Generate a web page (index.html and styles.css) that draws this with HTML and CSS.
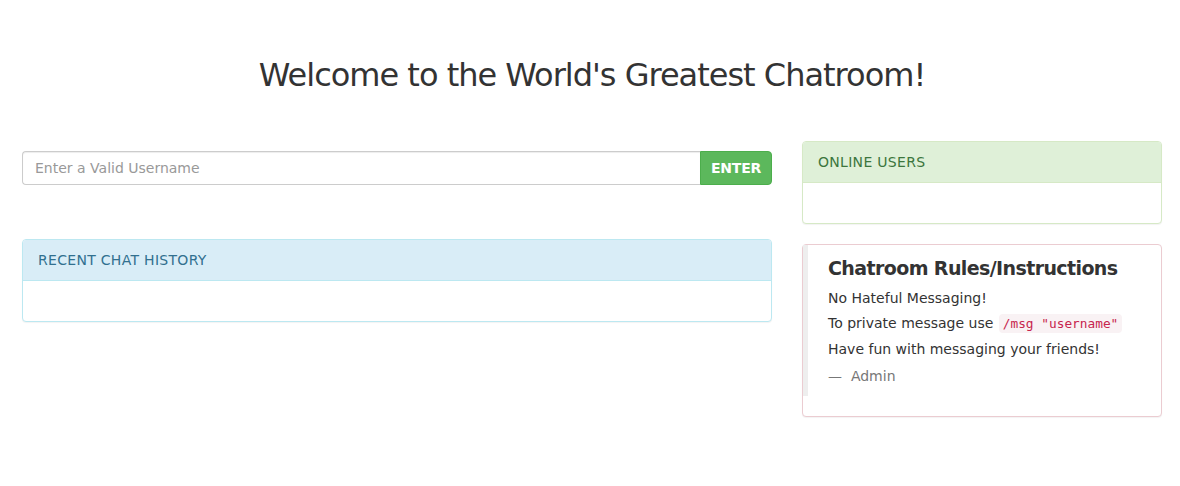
FILE: index.html
```html
<!DOCTYPE html>
<html lang="en">
<head>
<meta charset="utf-8">
<title>Chatroom</title>
<link rel="stylesheet" href="styles.css">
</head>
<body>
<div class="page">
  <h1 class="title">Welcome to the World's Greatest Chatroom!</h1>
  <div class="row">
    <div class="col-main">
      <form class="input-group">
        <input class="username" type="text" placeholder="Enter a Valid Username">
        <button class="btn-enter" type="button">ENTER</button>
      </form>
      <div class="panel panel-info chat-panel">
        <div class="panel-heading">RECENT CHAT HISTORY</div>
        <div class="panel-body"></div>
      </div>
    </div>
    <div class="col-side">
      <div class="panel panel-success">
        <div class="panel-heading">ONLINE USERS</div>
        <div class="panel-body"></div>
      </div>
      <div class="panel panel-danger rules">
        <blockquote class="quote">
          <h4 class="rules-title">Chatroom Rules/Instructions</h4>
          <p>No Hateful Messaging!</p>
          <p>To private message use <code>/msg "username"</code></p>
          <p>Have fun with messaging your friends!</p>
          <footer class="quote-footer">Admin</footer>
        </blockquote>
      </div>
    </div>
  </div>
</div>
</body>
</html>
```

FILE: styles.css
```css
* { box-sizing: border-box; }
html, body { margin: 0; padding: 0; background: #fff; }
body {
  font-family: "DejaVu Sans", Verdana, sans-serif;
  font-size: 14px;
  line-height: 20px;
  color: #333;
}
.page {
  padding: 0 18px 0 22px;
}
.title {
  margin: 0;
  padding-top: 55px;
  height: 141px;
  font-size: 32px;
  line-height: 40px;
  letter-spacing: -1px;
  font-weight: normal;
  text-align: center;
  color: #333;
}
.row {
  display: grid;
  grid-template-columns: 750px 360px;
  column-gap: 30px;
  align-items: start;
}
.col-main { padding-top: 10px; }
.input-group {
  display: flex;
  margin: 0;
  height: 34px;
}
.username {
  flex: 1;
  height: 34px;
  padding: 6px 12px;
  border: 1px solid #ccc;
  border-right: 0;
  border-radius: 4px 0 0 4px;
  font-family: inherit;
  font-size: 14px;
  color: #555;
  outline: none;
  box-shadow: inset 0 1px 1px rgba(0,0,0,.075);
}
.username::placeholder { color: #999; }
.btn-enter {
  width: 72px;
  height: 34px;
  border: 1px solid #4cae4c;
  border-radius: 0 4px 4px 0;
  background: #5cb85c;
  color: #fff;
  font-family: inherit;
  font-size: 14px;
  font-weight: bold;
  letter-spacing: -0.2px;
  padding: 0;
}
.panel {
  border: 1px solid transparent;
  border-radius: 4px;
  background: #fff;
  margin-bottom: 20px;
  box-shadow: 0 1px 1px rgba(0,0,0,.05);
}
.chat-panel { margin-top: 54px; }
.panel-heading {
  padding: 10px 15px;
  border-bottom: 1px solid transparent;
  border-radius: 3px 3px 0 0;
  letter-spacing: 0.3px;
}
.panel-body { height: 40px; }
.panel-info { border-color: #bce8f1; }
.panel-info .panel-heading { background: #d9edf7; color: #31708f; border-bottom-color: #bce8f1; }
.panel-success { border-color: #d6e9c6; }
.panel-success .panel-heading { background: #dff0d8; color: #3c763d; border-bottom-color: #d6e9c6; }
.panel-danger { border-color: #ebccd1; }
.quote {
  margin: 0 0 20px;
  padding: 10px 20px;
  border-left: 5px solid #eee;
}
.rules-title {
  margin: 0 0 7px;
  font-size: 19px;
  line-height: 26px;
  letter-spacing: -0.6px;
  font-weight: bold;
  color: #333;
}
.quote p { margin: 0 0 5px; }
code {
  font-family: "DejaVu Sans Mono", "Liberation Mono", monospace;
  font-size: 12.8px;
  margin-left: 1px;
  padding: 2px 4px;
  color: #c7254e;
  background: #f9f2f4;
  border-radius: 4px;
}
.quote-footer {
  margin-top: 7px;
  color: #777;
}
.quote-footer::before { content: "\2014 \00A0\00A0"; }
```
